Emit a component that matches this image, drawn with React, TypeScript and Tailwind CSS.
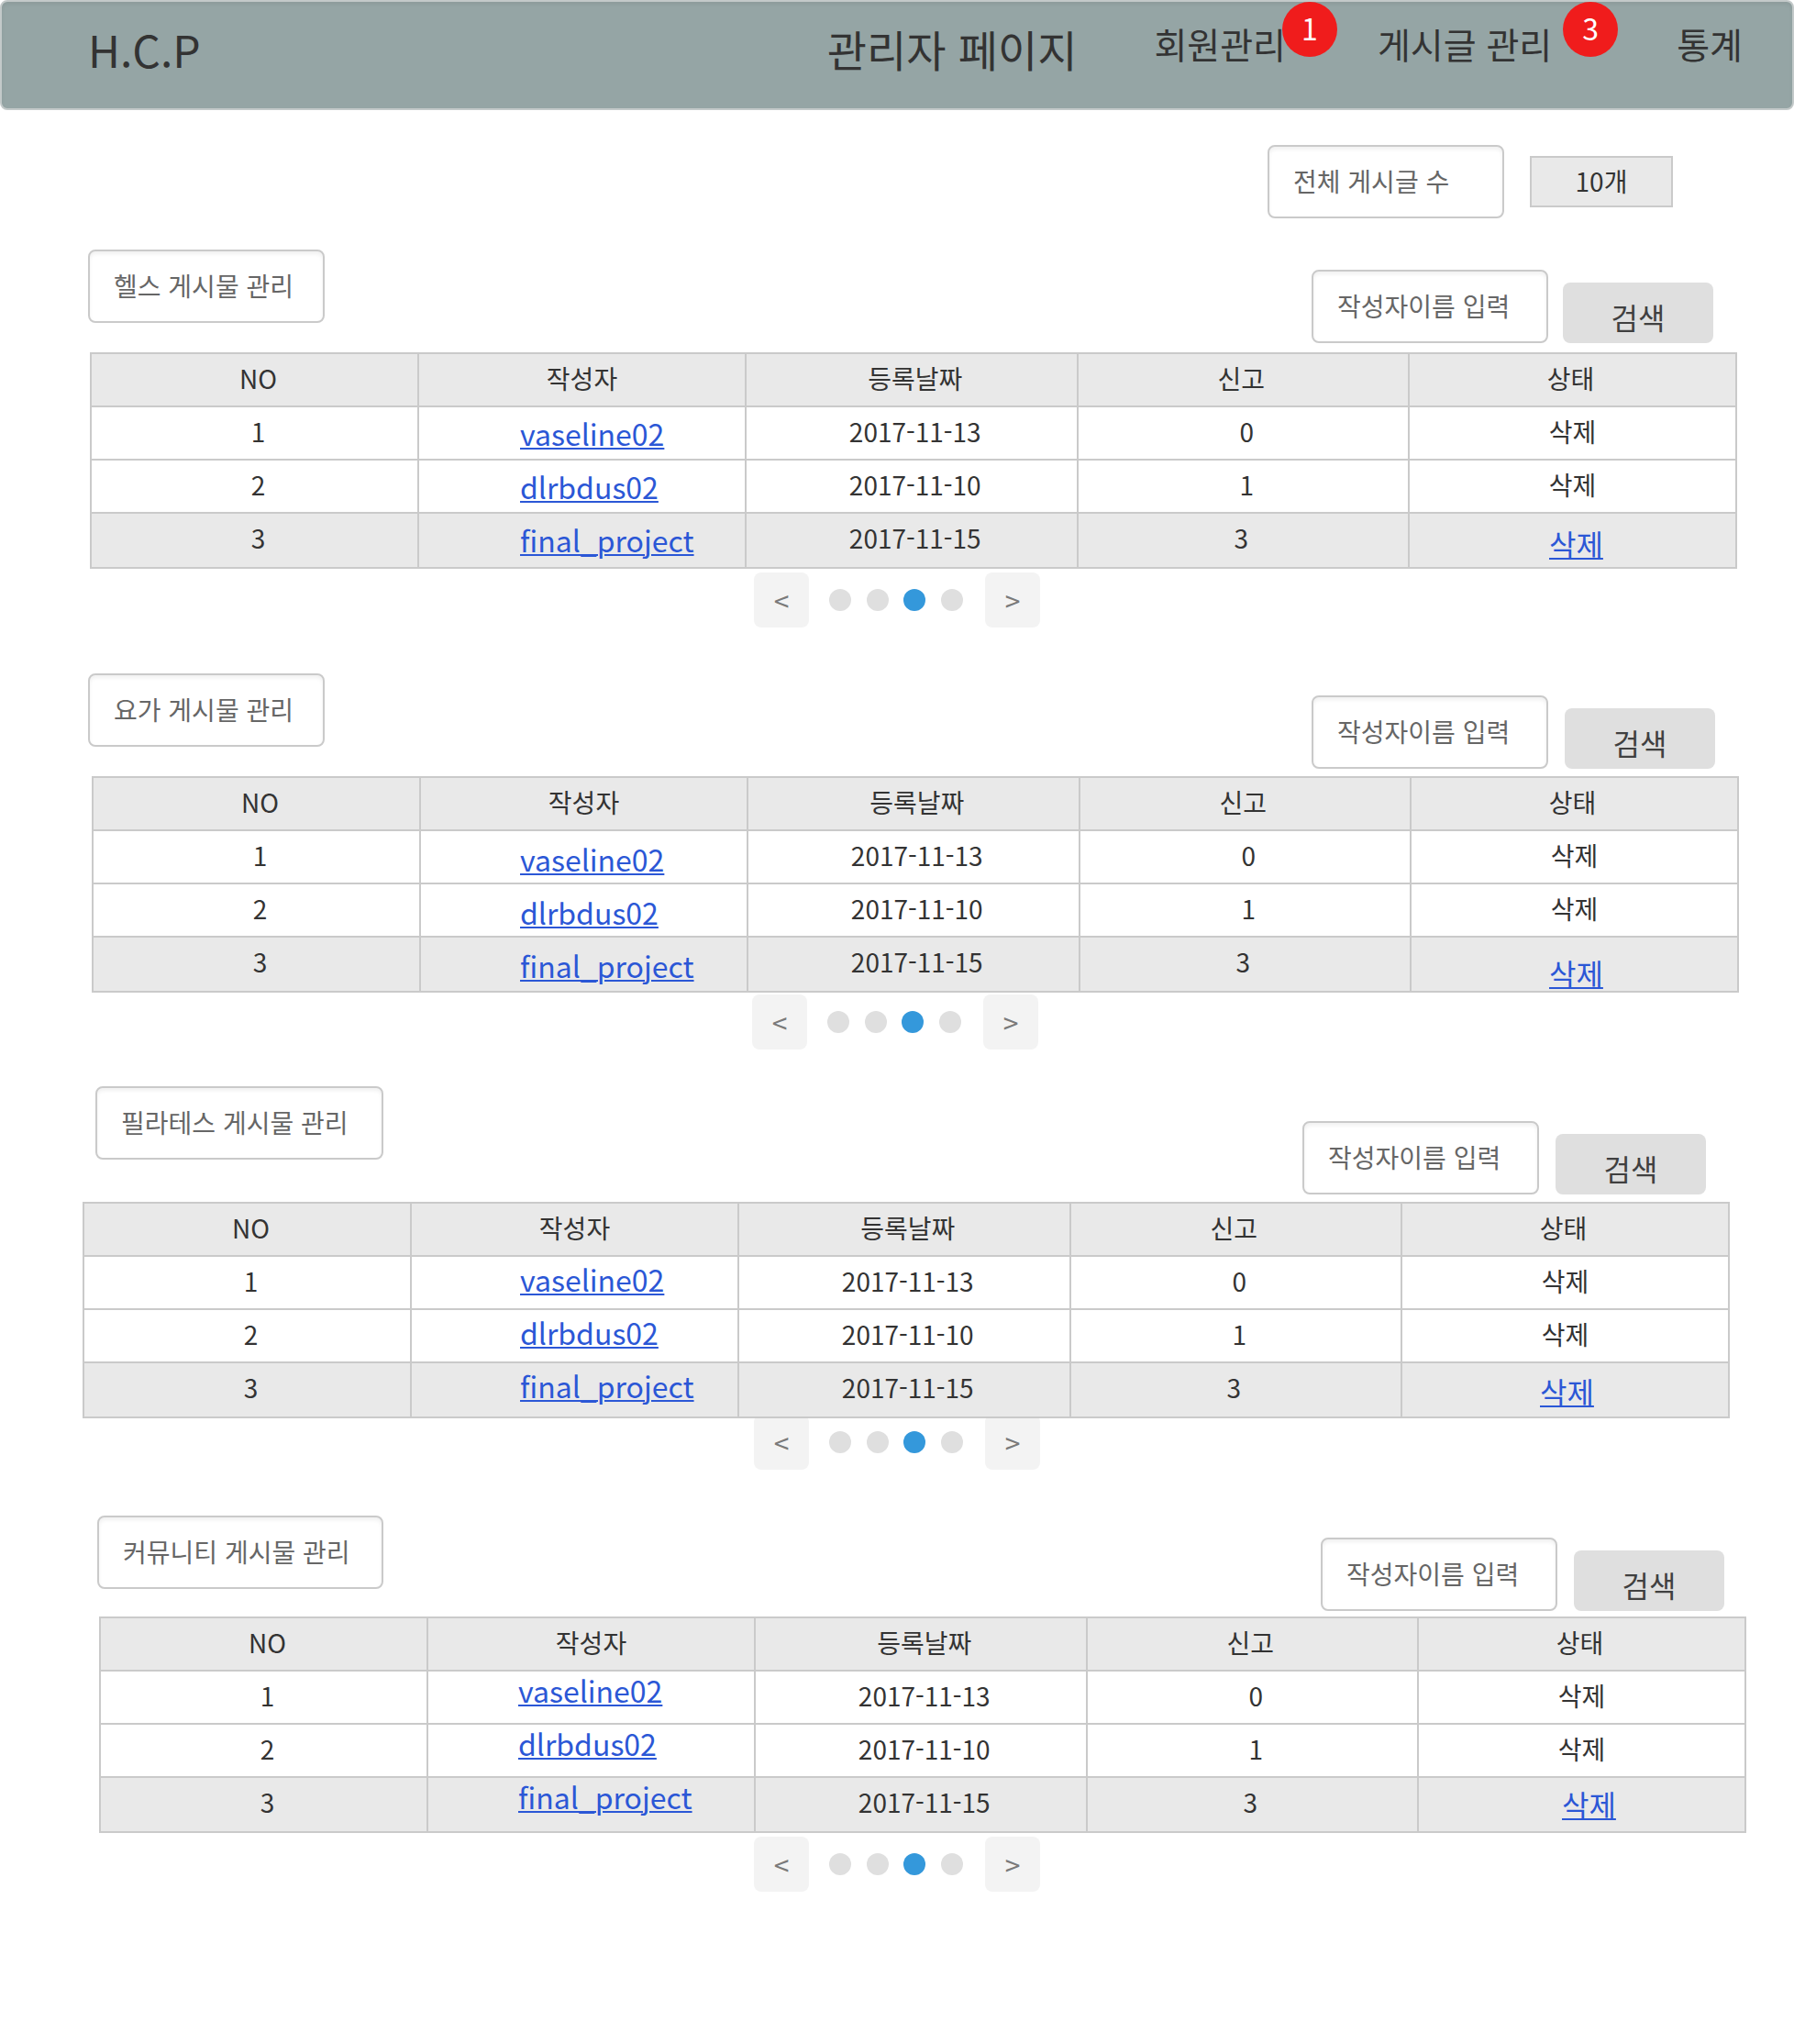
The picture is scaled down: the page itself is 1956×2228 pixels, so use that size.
type Board = {
  id: string;
  title: string;
  section: string;
  toolbar: string;
  titleWidth: string;
  search: string;
  tableWrap: string;
  authorCell: string;
  deleteCell: string;
  pager: string;
};

const boards: Board[] = [
  {
    id: "health",
    title: "헬스 게시물 관리",
    section: "mt-[34px]",
    toolbar: "pl-24 pr-[88px]",
    titleWidth: "w-[258px]",
    search: "mt-[22px] gap-4",
    tableWrap: "mt-[10px] pl-[98px] pr-[62px]",
    authorCell: "pt-2 pl-[110px]",
    deleteCell: "pt-3 pl-[152px]",
    pager: "mt-1",
  },
  {
    id: "yoga",
    title: "요가 게시물 관리",
    section: "mt-[50px]",
    toolbar: "pl-24 pr-[86px]",
    titleWidth: "w-[258px]",
    search: "mt-6 gap-[18px]",
    tableWrap: "mt-2 pl-[100px] pr-[60px]",
    authorCell: "pt-[10px] pl-[108px]",
    deleteCell: "pt-[18px] pl-[150px]",
    pager: "mt-[2px] pr-1",
  },
  {
    id: "pilates",
    title: "필라테스 게시물 관리",
    section: "mt-10",
    toolbar: "pl-[104px] pr-24",
    titleWidth: "w-[314px]",
    search: "mt-[38px] gap-[18px]",
    tableWrap: "mt-2 pl-[90px] pr-[70px]",
    authorCell: "pt-1 pl-[118px]",
    deleteCell: "pt-[10px] pl-[150px]",
    pager: "-mt-1",
  },
  {
    id: "community",
    title: "커뮤니티 게시물 관리",
    section: "mt-[50px]",
    toolbar: "pl-[106px] pr-[76px]",
    titleWidth: "w-[312px]",
    search: "mt-6 gap-[18px]",
    tableWrap: "mt-[6px] pl-[108px] pr-[52px]",
    authorCell: "pt-0 pl-[98px]",
    deleteCell: "pt-2 pl-[156px]",
    pager: "mt-1",
  },
];

const posts = [
  { no: 1, author: "vaseline02", date: "2017-11-13", reports: 0, flagged: false },
  { no: 2, author: "dlrbdus02", date: "2017-11-10", reports: 1, flagged: false },
  { no: 3, author: "final_project", date: "2017-11-15", reports: 3, flagged: true },
];

const fieldClass =
  "h-20 shrink-0 rounded-lg border-2 border-[#cacaca] bg-white px-[26px] pb-[2px] text-[28px] text-[#666666] placeholder:text-[#666666] placeholder:opacity-100 shadow-[inset_0_3px_4px_rgba(0,0,0,0.06)] outline-none";

const cell = "border-2 border-[#cacaca] p-0 align-top font-normal leading-[52px]";
const linkCell = "border-2 border-[#cacaca] p-0 align-top text-left text-[32px] leading-10";
const link = "text-[#2b57d6] underline decoration-2 underline-offset-[2px]";

function Badge({ count, place }: { count: number; place: string }) {
  return (
    <span
      className={`absolute -top-4 left-full size-[60px] rounded-full bg-[#f01c1c] text-center text-[32px] leading-[56px] text-white ${place}`}
    >
      {count}
    </span>
  );
}

function Header() {
  return (
    <header className="flex h-[120px] items-start rounded-lg border-2 border-[#c3c9c9] bg-[#95a5a5] pt-4 pr-[54px] pl-[94px] text-[#333333] shadow-[inset_0_3px_4px_rgba(0,0,0,0.06)]">
      <a href="#" className="text-[48px] leading-[70px]">
        H.C.P
      </a>
      <h1 className="ml-auto text-[47px] leading-[70px]">관리자 페이지</h1>
      <nav className="ml-[84px] flex items-start gap-[100px] text-[39px] leading-[58px]">
        <a href="#members" className="relative">
          회원관리
          <Badge count={1} place="-ml-1" />
        </a>
        <a href="#posts" className="relative">
          게시글 관리
          <Badge count={3} place="ml-3" />
        </a>
        <a href="#stats" className="ml-9">
          통계
        </a>
      </nav>
    </header>
  );
}

function Pager({ place }: { place: string }) {
  const arrow = "h-[60px] w-[60px] rounded-lg bg-[#f3f3f3] text-[30px] text-[#7a7a7a]";
  return (
    <div className={`flex items-center justify-center ${place}`}>
      <button type="button" aria-label="이전" className={arrow}>
        &lt;
      </button>
      <div className="mr-6 ml-[22px] flex w-[146px] justify-between">
        {[1, 2, 3, 4].map((page) => (
          <button
            key={page}
            type="button"
            aria-label={`${page} 페이지`}
            className={`size-6 rounded-full ${page === 3 ? "bg-[#3498db]" : "bg-[#dfdfdf]"}`}
          />
        ))}
      </div>
      <button type="button" aria-label="다음" className={arrow}>
        &gt;
      </button>
    </div>
  );
}

function BoardSection({ board }: { board: Board }) {
  return (
    <section className={board.section}>
      <div className={`flex items-start justify-between ${board.toolbar}`}>
        <input
          readOnly
          aria-label="게시판 이름"
          value={board.title}
          className={`${fieldClass} ${board.titleWidth}`}
        />
        <form className={`flex items-end ${board.search}`} onSubmit={(e) => e.preventDefault()}>
          <input
            id={`${board.id}-author`}
            aria-label="작성자이름 입력"
            placeholder="작성자이름 입력"
            className={`${fieldClass} w-[258px]`}
          />
          <button
            type="submit"
            className="h-[66px] w-[164px] rounded-lg bg-[#dfdfdf] pt-2 text-[32px] text-[#404040]"
          >
            검색
          </button>
        </form>
      </div>
      <div className={`relative z-10 ${board.tableWrap}`}>
        <table className="w-full table-fixed border-collapse bg-white text-center text-[28px] text-[#333333]">
          <colgroup>
            <col className="w-[19.9%]" />
            <col className="w-[19.9%]" />
            <col />
            <col />
            <col className="w-[19.9%]" />
          </colgroup>
          <thead className="bg-[#e9e9e9]">
            <tr className="h-[58px]">
              <th className={`${cell} pl-2`}>NO</th>
              <th className={cell}>작성자</th>
              <th className={`${cell} pl-2`}>등록날짜</th>
              <th className={`${cell} pr-1`}>신고</th>
              <th className={`${cell} pr-1`}>상태</th>
            </tr>
          </thead>
          <tbody>
            {posts.map((post) => (
              <tr key={post.no} className={post.flagged ? "h-[60px] bg-[#e9e9e9]" : "h-[58px]"}>
                <td className={`${cell} pl-2`}>{post.no}</td>
                <td className={`${linkCell} ${board.authorCell}`}>
                  <a href={`#${post.author}`} className={link}>
                    {post.author}
                  </a>
                </td>
                <td className={`${cell} pl-2`}>{post.date}</td>
                <td className={`${cell} ${post.flagged ? "pr-1" : "pl-2"}`}>{post.reports}</td>
                {post.flagged ? (
                  <td className={`${linkCell} ${board.deleteCell}`}>
                    <a href="#delete" className={link}>
                      삭제
                    </a>
                  </td>
                ) : (
                  <td className={cell}>삭제</td>
                )}
              </tr>
            ))}
          </tbody>
        </table>
      </div>
      <Pager place={board.pager} />
    </section>
  );
}

export default function App() {
  return (
    <div
      lang="ko"
      className="min-h-screen bg-white pb-40 font-['Noto_Sans_CJK_KR','Noto_Sans',sans-serif]"
    >
      <Header />
      <main>
        <div className="mt-[38px] flex items-center justify-end gap-7 pr-[132px]">
          <input
            readOnly
            aria-label="항목"
            value="전체 게시글 수"
            className={`${fieldClass} w-[258px]`}
          />
          <output className="h-14 w-[156px] border-2 border-[#cacaca] bg-[#e9e9e9] text-center text-[28px] leading-[50px] text-[#333333]">
            10개
          </output>
        </div>
        {boards.map((board) => (
          <BoardSection key={board.id} board={board} />
        ))}
      </main>
    </div>
  );
}
